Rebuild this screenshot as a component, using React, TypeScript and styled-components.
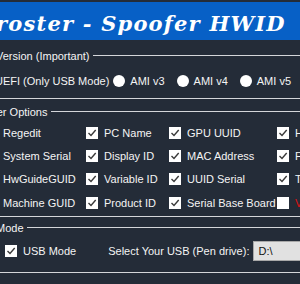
import styled, { createGlobalStyle } from 'styled-components';

const GlobalStyle = createGlobalStyle`
  html, body {
    margin: 0;
    padding: 0;
    background: #242c38;
  }
  body {
    font-family: "Liberation Sans", Arial, sans-serif;
  }
`;

const Window = styled.div`
  width: 300px;
  height: 284px;
  overflow: hidden;
  background: #242c38;
  color: #f4f4f4;
  font-size: 11px;
  padding-top: 2px;
  box-sizing: border-box;
`;

const TitleBar = styled.div`
  height: 38px;
  background: #0760c6;
  display: flex;
  align-items: center;
  white-space: nowrap;
  overflow: hidden;
`;

const TitleText = styled.div`
  font-family: "DejaVu Serif", serif;
  font-style: italic;
  font-weight: 700;
  font-size: 21px;
  letter-spacing: 1.2px;
  color: #ffffff;
  margin-left: -4px;
  margin-top: 4px;
`;

const Group = styled.div<{ $top: number; $padBottom: number }>`
  margin-top: ${(p) => p.$top}px;
  padding-bottom: ${(p) => p.$padBottom}px;
  border-bottom: 1px solid #d4d6da;
`;

const Legend = styled.div<{ $shift: number }>`
  display: flex;
  align-items: center;
  gap: 3px;
  height: 14px;
  line-height: 14px;
  white-space: nowrap;
  margin-left: ${(p) => p.$shift}px;

  &::after {
    content: '';
    flex: 1;
    height: 1px;
    background: #d4d6da;
    margin-top: -1px;
  }
`;

const Content = styled.div<{ $gap: number }>`
  margin-top: ${(p) => p.$gap}px;
`;

const RadioRow = styled.div`
  display: flex;
  align-items: center;
  height: 16px;
  margin-left: -22px;
  white-space: nowrap;
`;

const RadioItem = styled.label<{ $gap: number }>`
  display: flex;
  align-items: center;
  gap: 5px;
  margin-right: ${(p) => p.$gap}px;
`;

const RadioDot = styled.span`
  width: 12px;
  height: 12px;
  border-radius: 50%;
  background: #ffffff;
  flex: none;
`;

const OptionGrid = styled.div`
  display: grid;
  grid-template-columns: 101px 83px 108px 100px;
  grid-auto-rows: 23.33px;
  margin-left: -15px;
  white-space: nowrap;
`;

const Option = styled.label`
  display: flex;
  align-items: center;
  gap: 6px;
`;

const OptionText = styled.span<{ $color?: string }>`
  color: ${(p) => p.$color ?? '#f4f4f4'};
`;

const Box = styled.span`
  width: 12px;
  height: 12px;
  background: #ffffff;
  flex: none;
  display: flex;
  align-items: center;
  justify-content: center;
`;

const ModeRow = styled.div`
  display: flex;
  align-items: center;
  height: 20px;
  white-space: nowrap;
  padding-left: 5px;
`;

const ModeLabel = styled.span`
  margin-left: 32px;
  margin-right: 4px;
`;

const DriveBox = styled.div`
  width: 80px;
  height: 20px;
  box-sizing: border-box;
  background: #e1e1e1;
  border: 1px solid #a8a8a8;
  color: #111111;
  padding-left: 4px;
  line-height: 18px;
  flex: none;
`;

const CheckBox = ({ checked }: { checked: boolean }) => (
  <Box>
    {checked && (
      <svg width="10" height="10" viewBox="0 0 10 10">
        <path d="M1.5 5 L4 7.5 L8.7 2" fill="none" stroke="#3a3a3a" strokeWidth="1.4" />
      </svg>
    )}
  </Box>
);

type Opt = { label: string; checked: boolean; color?: string };

const options: Opt[] = [
  { label: 'Regedit', checked: true },
  { label: 'PC Name', checked: true },
  { label: 'GPU UUID', checked: true },
  { label: 'HDD Serial', checked: true },
  { label: 'System Serial', checked: true },
  { label: 'Display ID', checked: true },
  { label: 'MAC Address', checked: true },
  { label: 'Firmware', checked: true },
  { label: 'HwGuideGUID', checked: true },
  { label: 'Variable ID', checked: true },
  { label: 'UUID Serial', checked: true },
  { label: 'TPM', checked: true },
  { label: 'Machine GUID', checked: true },
  { label: 'Product ID', checked: true },
  { label: 'Serial Base Board', checked: true },
  { label: 'Volume ID', checked: false, color: '#e01010' },
];

const radios = [
  { label: 'UEFI (Only USB Mode)', gap: 4 },
  { label: 'AMI v3', gap: 12 },
  { label: 'AMI v4', gap: 12 },
  { label: 'AMI v5', gap: 12 },
];

export default function App() {
  return (
    <>
      <GlobalStyle />
      <Window>
        <TitleBar>
          <TitleText>roster - Spoofer HWID</TitleText>
        </TitleBar>

        <Group $top={9} $padBottom={9}>
          <Legend $shift={-4}>Version (Important)</Legend>
          <Content $gap={10}>
            <RadioRow>
              {radios.map((r) => (
                <RadioItem key={r.label} $gap={r.gap}>
                  <RadioDot />
                  <span>{r.label}</span>
                </RadioItem>
              ))}
            </RadioRow>
          </Content>
        </Group>

        <Group $top={6} $padBottom={2}>
          <Legend $shift={-32}>Spoofer Options</Legend>
          <Content $gap={2}>
            <OptionGrid>
              {options.map((o) => (
                <Option key={o.label}>
                  <CheckBox checked={o.checked} />
                  <OptionText $color={o.color}>{o.label}</OptionText>
                </Option>
              ))}
            </OptionGrid>
          </Content>
        </Group>

        <Group $top={4} $padBottom={11}>
          <Legend $shift={-4}>Mode</Legend>
          <Content $gap={6}>
            <ModeRow>
              <Option>
                <CheckBox checked />
                <span>USB Mode</span>
              </Option>
              <ModeLabel>Select Your USB (Pen drive):</ModeLabel>
              <DriveBox>D:\</DriveBox>
            </ModeRow>
          </Content>
        </Group>
      </Window>
    </>
  );
}
